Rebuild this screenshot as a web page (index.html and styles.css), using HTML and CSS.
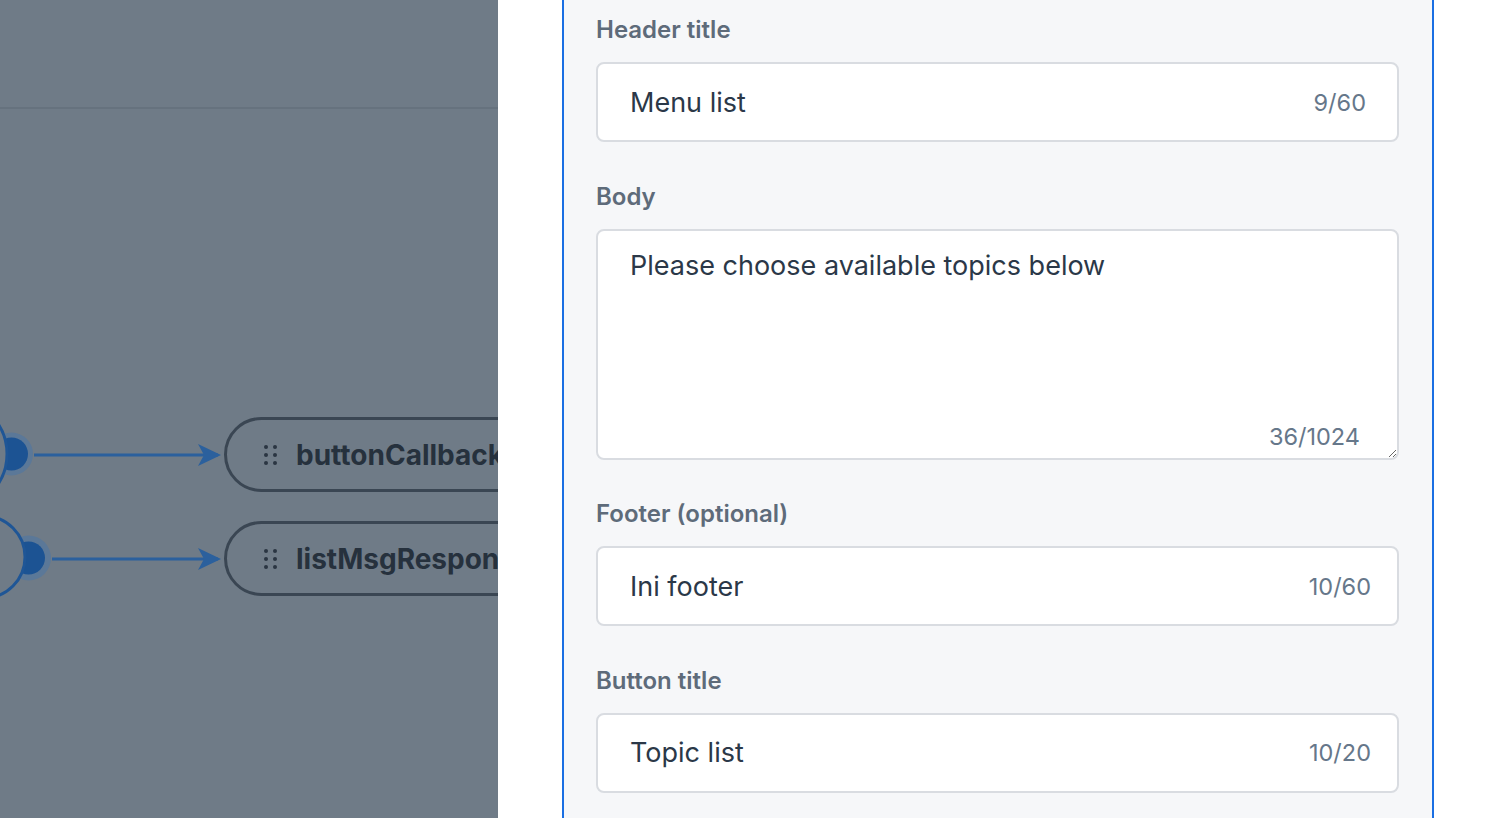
FILE: index.html
```html
<!DOCTYPE html>
<html lang="en">
<head>
<meta charset="utf-8">
<title>List message editor</title>
<link rel="stylesheet" href="styles.css">
</head>
<body>
<div class="page">
  <div class="canvas">
    <div class="canvas-rule"></div>
    <svg class="edges" width="498" height="818" viewBox="0 0 498 818">
      <circle cx="11.5" cy="454" r="21.5" fill="#5b7898"/>
      <circle cx="11.5" cy="454" r="16.5" fill="#1c5393"/>
      <circle cx="28.5" cy="558" r="22.5" fill="#5b7898"/>
      <circle cx="28.5" cy="558" r="16.5" fill="#1c5393"/>
      <circle cx="-48" cy="454" r="55" fill="#6f7b87" stroke="#1f5696" stroke-width="3"/>
      <circle cx="-16" cy="557" r="41" fill="#6f7b87" stroke="#1f5696" stroke-width="3"/>
      <line x1="34" y1="455" x2="218" y2="455" stroke="#2b609d" stroke-width="3"/>
      <line x1="52" y1="559" x2="218" y2="559" stroke="#2b609d" stroke-width="3"/>
      <path d="M198 444 L221 455 L198 466 L204 455 Z" fill="#2b609d"/>
      <path d="M198 548 L221 559 L198 570 L204 559 Z" fill="#2b609d"/>
    </svg>
    <div class="node node-a"><span class="grip"><i></i><i></i><i></i><i></i><i></i><i></i></span><span class="node-name">buttonCallback</span></div>
    <div class="node node-b"><span class="grip"><i></i><i></i><i></i><i></i><i></i><i></i></span><span class="node-name">listMsgResponse</span></div>
  </div>
  <div class="panel">
    <div class="form">
      <div class="field">
        <label class="label">Header title</label>
        <div class="input-box">
          <input class="input" type="text" value="Menu list">
          <span class="count count-narrow">9/60</span>
        </div>
      </div>
      <div class="field">
        <label class="label">Body</label>
        <div class="area-box">
          <textarea class="area">Please choose available topics below</textarea>
          <span class="count area-count">36/1024</span>
        </div>
      </div>
      <div class="field">
        <label class="label">Footer (optional)</label>
        <div class="input-box">
          <input class="input" type="text" value="Ini footer">
          <span class="count">10/60</span>
        </div>
      </div>
      <div class="field">
        <label class="label">Button title</label>
        <div class="input-box">
          <input class="input" type="text" value="Topic list">
          <span class="count">10/20</span>
        </div>
      </div>
    </div>
  </div>
</div>
</body>
</html>
```
FILE: styles.css
```css
* { box-sizing: border-box; }
html, body { margin: 0; padding: 0; }
body {
  width: 1498px;
  height: 818px;
  overflow: hidden;
  font-family: Inter, "Noto Sans", "Liberation Sans", sans-serif;
  background: #ffffff;
}
.page {
  display: flex;
  height: 818px;
}
.canvas {
  position: relative;
  width: 498px;
  flex: none;
  height: 818px;
  background: #6f7b87;
  overflow: hidden;
}
.canvas-rule {
  margin-top: 107px;
  height: 2px;
  background: #66727e;
}
.edges {
  position: absolute;
  left: 0;
  top: 0;
}
.node {
  position: absolute;
  left: 224px;
  height: 75px;
  width: 340px;
  border: 3px solid #3a4653;
  border-radius: 38px;
  display: flex;
  align-items: center;
  padding-left: 37px;
  gap: 19px;
  white-space: nowrap;
}
.node-a { top: 417px; }
.node-b { top: 521px; }
.grip {
  display: grid;
  grid-template-columns: 4px 4px;
  gap: 4px 5px;
}
.grip i {
  width: 4px;
  height: 4px;
  border-radius: 50%;
  background: #2a3542;
}
.node-name {
  font-size: 28px;
  font-weight: 700;
  color: #26313d;
}
.panel {
  flex: 1;
  background: #ffffff;
  padding-left: 64px;
}
.form {
  width: 872px;
  height: 818px;
  background: #f6f7f9;
  border-left: 2px solid #1a6fe3;
  border-right: 2px solid #1a6fe3;
  padding: 15px 33px 0 32px;
  display: flex;
  flex-direction: column;
  gap: 39.5px;
}
.field {
  display: flex;
  flex-direction: column;
  gap: 17px;
}
.label {
  font-size: 24px;
  line-height: 30px;
  font-weight: 600;
  color: #5e6b7a;
}
.input-box {
  height: 80px;
  display: flex;
  align-items: center;
  background: #ffffff;
  border: 2px solid #d9dce1;
  border-radius: 8px;
  padding: 0 26px 0 32px;
}
.input {
  flex: 1;
  min-width: 0;
  border: 0;
  outline: none;
  background: transparent;
  padding: 0;
  font-family: inherit;
  font-size: 27px;
  color: #2b3848;
}
.count {
  font-size: 23.5px;
  color: #66778a;
}
.count-narrow { margin-right: 5px; }
.area-box {
  position: relative;
  height: 231px;
}
.area {
  display: block;
  width: 100%;
  height: 100%;
  resize: both;
  background: #ffffff;
  border: 2px solid #d9dce1;
  border-radius: 8px;
  padding: 18px 32px;
  font-family: inherit;
  font-size: 27px;
  line-height: 34px;
  color: #2b3848;
  outline: none;
}
.area-count {
  position: absolute;
  right: 39px;
  bottom: 9px;
}
```
